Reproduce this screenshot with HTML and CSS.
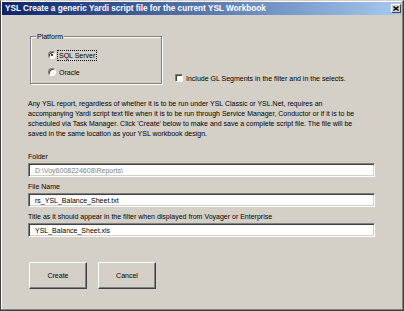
FILE: index.html
```html
<!DOCTYPE html>
<html lang="en">
<head>
    <meta charset="UTF-8">
    <meta name="viewport" content="width=device-width, initial-scale=1.0">
    <title>YSL Create a generic Yardi script file</title>
    <link rel="stylesheet" href="styles.css">
</head>
<body>

<!-- Dialog window -->
<div class="window">
    <div class="title-bar">
        <span class="title">YSL Create a generic Yardi script file for the current YSL Workbook</span>
        <span class="close-btn">
            <svg width="6" height="5" viewBox="0 0 6 5"><path d="M0.5 0.5 L5.5 4.5 M5.5 0.5 L0.5 4.5" stroke="#000" stroke-width="1.4"/></svg>
        </span>
    </div>

    <div class="dialog">
        <!-- Platform and options -->
        <div class="options">
            <div class="group">
                <span class="group-label">Platform</span>
                <div class="radio"><span class="radio-dot checked"></span><span class="focus">SQL Server</span></div>
                <div class="radio"><span class="radio-dot"></span><span class="radio-text">Oracle</span></div>
            </div>
            <div class="check"><span class="check-box"></span>Include GL Segments in the filter and in the selects.</div>
        </div>

        <p class="info">
            Any YSL report, regardless of whether it is to be run under YSL Classic or YSL.Net, requires an<br>
            accompanying Yardi script text file when it is to be run through Service Manager, Conductor or if it is to be<br>
            scheduled via Task Manager. Click 'Create' below to make and save a complete script file. The file will be<br>
            saved in the same location as your YSL workbook design.
        </p>

        <!-- Fields -->
        <div class="field first">
            <div class="field-label">Folder</div>
            <div class="textbox disabled">D:\Voy6008224608\Reports\</div>
        </div>
        <div class="field">
            <div class="field-label">File Name</div>
            <div class="textbox">rs_YSL_Balance_Sheet.txt</div>
        </div>
        <div class="field">
            <div class="field-label">Title as it should appear in the filter when displayed from Voyager or Enterprise</div>
            <div class="textbox">YSL_Balance_Sheet.xls</div>
        </div>

        <div class="buttons">
            <button class="btn">Create</button>
            <button class="btn">Cancel</button>
        </div>
    </div>
</div>

</body>
</html>
```

FILE: styles.css
```css
body {
    margin: 0;
    font-family: "Liberation Sans", Arial, sans-serif;
    font-size: 7px;
    color: #000;
    background: #d4d0c8;
}

.window {
    width: 404px;
    height: 311px;
    box-sizing: border-box;
    border: 1px solid #404040;
    border-top-color: #d4d0c8;
    padding: 1px;
    background: #d4d0c8;
    box-shadow: inset -1px -1px 0 #808080, inset 1px 1px 0 #fff;
}

.title-bar {
    height: 13px;
    display: flex;
    align-items: center;
    justify-content: space-between;
    padding: 0 1px 0 3px;
    background: linear-gradient(to right, #0a246a, #a6caf0);
    color: #fff;
    font-weight: bold;
    font-size: 8.2px;
}

.close-btn {
    width: 10px;
    height: 9px;
    box-sizing: border-box;
    display: flex;
    align-items: center;
    justify-content: center;
    background: #d4d0c8;
    border: 1px solid;
    border-color: #fff #404040 #404040 #fff;
}

.close-btn svg {
    display: block;
}

.dialog {
    padding-left: 26px;
}

.options {
    display: flex;
    align-items: flex-end;
    margin-top: 21px;
}

.group {
    position: relative;
    width: 132px;
    height: 48px;
    box-sizing: border-box;
    margin-left: 2px;
    padding: 13px 0 0 17px;
    border: 1px solid #808080;
    box-shadow: 1px 1px 0 #fff, inset 1px 1px 0 #fff;
    display: flex;
    flex-direction: column;
    gap: 7px;
}

.group-label {
    position: absolute;
    top: -5px;
    left: 5px;
    padding: 0 1px;
    line-height: 10px;
    background: #d4d0c8;
}

.radio {
    display: flex;
    align-items: center;
    height: 10px;
    gap: 1px;
}

.radio-dot {
    position: relative;
    width: 8px;
    height: 8px;
    box-sizing: border-box;
    border-radius: 50%;
    background: #fff;
    border: 1px solid;
    border-color: #808080 #fff #fff #808080;
    box-shadow: inset 1px 1px 0 #404040;
}

.radio-dot.checked::after {
    content: "";
    position: absolute;
    left: 2px;
    top: 2px;
    width: 2px;
    height: 2px;
    border-radius: 50%;
    background: #000;
}

.focus {
    padding: 0 1px;
    line-height: 9px;
    border: 1px dotted #000;
}

.radio-text {
    padding-left: 2px;
}

.check {
    display: flex;
    align-items: center;
    gap: 3px;
    height: 10px;
    margin: 0 0 1px 13px;
}

.check-box {
    width: 8px;
    height: 8px;
    box-sizing: border-box;
    background: #fff;
    border: 1px solid;
    border-color: #808080 #fff #fff #808080;
    box-shadow: inset 1px 1px 0 #404040;
}

.info {
    margin: 15px 0 0;
    line-height: 10px;
}

.field {
    margin-top: 5px;
}

.field.first {
    margin-top: 13px;
}

.field-label {
    line-height: 10px;
    margin-bottom: 1px;
}

.textbox {
    width: 347px;
    height: 14px;
    box-sizing: border-box;
    display: flex;
    align-items: center;
    padding-left: 6px;
    background: #fff;
    border: 1px solid;
    border-color: #808080 #fff #fff #808080;
    box-shadow: inset 1px 1px 0 #404040, inset -1px -1px 0 #d4d0c8;
}

.textbox.disabled {
    color: #808080;
}

.buttons {
    display: flex;
    gap: 11px;
    margin: 25px 0 0 1px;
}

.btn {
    width: 58px;
    height: 27px;
    padding: 0;
    font: inherit;
    color: #000;
    background: #d4d0c8;
    border: 1px solid;
    border-color: #fff #404040 #404040 #fff;
    box-shadow: inset -1px -1px 0 #808080;
}
```
